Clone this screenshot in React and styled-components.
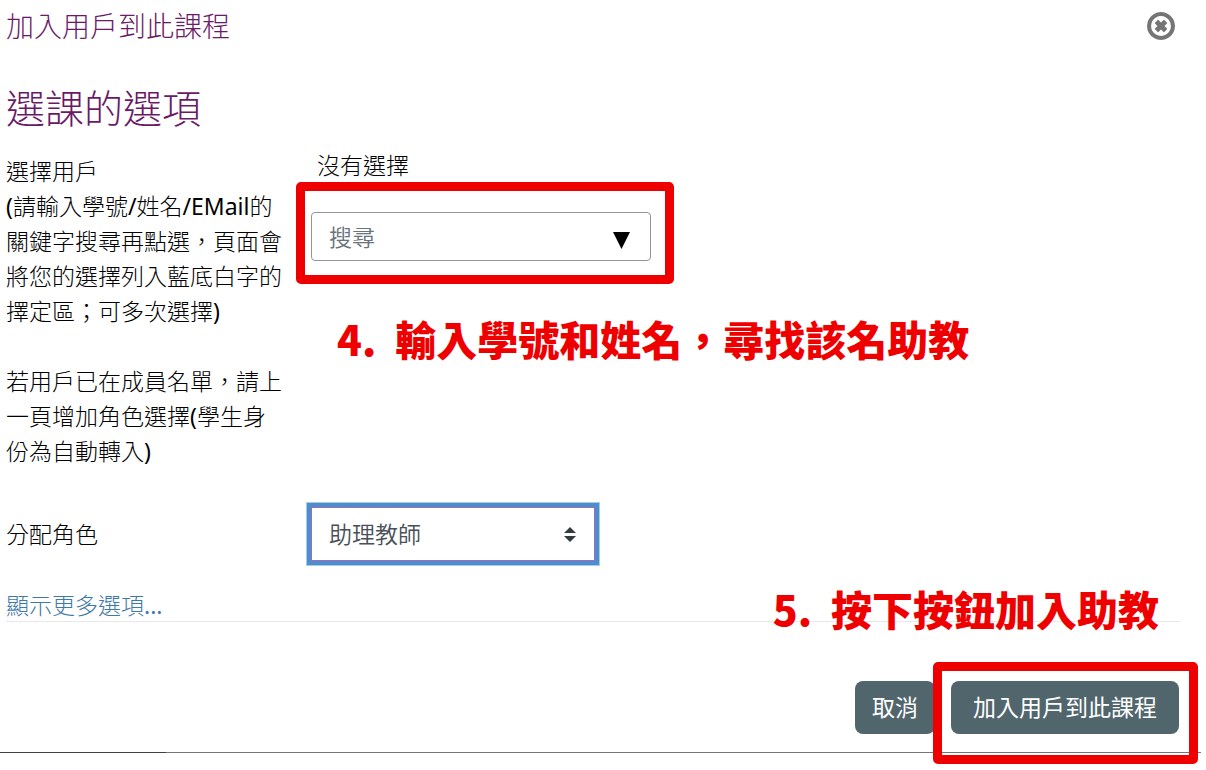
import React from "react";
import styled, { createGlobalStyle } from "styled-components";

const GlobalStyle = createGlobalStyle`
  *, *::before, *::after { box-sizing: border-box; }
  body {
    margin: 0;
    background: #fff;
    color: #1d2125;
    font-family: "Noto Sans", "Noto Sans CJK TC", sans-serif;
    font-size: 23px;
    line-height: 35px;
  }
  button, input, select { font: inherit; }
`;

const Dialog = styled.main`
  padding: 6px 26px 0 6px;
`;

const Header = styled.header`
  display: flex;
  justify-content: space-between;
  align-items: center;
  padding-right: 5px;
`;

const Title = styled.h1`
  margin: 0;
  color: #6a1a66;
  font-size: 28px;
  font-weight: 300;
  line-height: 40px;
`;

const CloseButton = styled.button`
  display: flex;
  padding: 0;
  border: 0;
  background: none;
  color: #757575;
  cursor: pointer;
`;

const SectionTitle = styled.h2`
  margin: 34px 0 18px;
  color: #6a1a66;
  font-size: 39px;
  font-weight: 300;
  line-height: 56px;
`;

const FieldRow = styled.div`
  display: grid;
  grid-template-columns: 305px minmax(0, 1fr);
  align-items: ${(p) => p.$align || "start"};
  margin-bottom: ${(p) => p.$gap || 0}px;
`;

const Label = styled.label`
  color: #000;
  font-weight: 300;
  white-space: nowrap;
`;

const Latin = styled.span`
  font-weight: 400;
`;

const SearchColumn = styled.div`
  position: relative;
  margin-top: -6px;
`;

const Status = styled.p`
  margin: 0 0 29px;
  padding-left: 6px;
  color: #000;
  font-weight: 300;
`;

const Combo = styled.div`
  position: relative;
  width: 340px;
`;

const SearchInput = styled.input`
  display: block;
  width: 100%;
  height: 49px;
  padding: 0 50px 0 17px;
  border: 1px solid #8f959e;
  border-radius: 4px;
  background: #fff;
  color: #495057;
  font-weight: 350;
  &::placeholder { color: #6a737b; opacity: 1; }
`;

const ComboArrow = styled.svg`
  position: absolute;
  top: 20px;
  right: 21px;
`;

const SelectBox = styled.div`
  position: relative;
  width: 284px;
`;

const Select = styled.select`
  display: block;
  width: 100%;
  height: 54px;
  padding: 0 48px 0 17px;
  appearance: none;
  border: 1px solid #a566c4;
  border-radius: 0;
  outline: 0;
  box-shadow: 0 0 0 4px #4a8fcc, 0 0 0 5px #a9cbe8;
  background: #fff;
  color: #495057;
  font-weight: 350;
`;

const SelectArrows = styled.svg`
  position: absolute;
  top: 20px;
  right: 19px;
  pointer-events: none;
`;

const MoreLink = styled.a`
  display: block;
  width: fit-content;
  color: #3f79a8;
  font-weight: 300;
  line-height: 32px;
  text-decoration: none;
`;

const Divider = styled.hr`
  margin: 0;
  border: 0;
  border-top: 1px solid #e9e9e9;
`;

const Footer = styled.footer`
  position: relative;
  display: flex;
  justify-content: flex-end;
  gap: 16px;
  padding: 59px 1px 18px 0;
`;

const ActionButton = styled.button`
  width: ${(p) => p.$width}px;
  height: 53px;
  padding: 0;
  border: 0;
  border-radius: 8px;
  background: #51666c;
  color: #fff;
  line-height: 53px;
  cursor: pointer;
`;

const BottomRule = styled.div`
  height: 1px;
  margin: 0 5px 16px 0;
  background: linear-gradient(to right, #404040 166px, #757575 166px);
`;

const Highlight = styled.div`
  position: absolute;
  top: ${(p) => p.$top}px;
  left: ${(p) => p.$left};
  right: ${(p) => p.$right};
  width: ${(p) => p.$width}px;
  height: 102px;
  border: 9px solid #ef0000;
  border-radius: 5px;
  pointer-events: none;
`;

const Note = styled.p`
  position: absolute;
  top: ${(p) => p.$top}px;
  left: ${(p) => p.$left};
  right: ${(p) => p.$right};
  margin: 0;
  color: #ef0000;
  font-family: "Noto Sans CJK TC", sans-serif;
  font-size: 41px;
  font-weight: 900;
  line-height: 60px;
  white-space: pre;
  pointer-events: none;
`;

export default function App() {
  return (
    <>
      <GlobalStyle />
      <Dialog>
        <Header>
          <Title>加入用戶到此課程</Title>
          <CloseButton type="button" aria-label="關閉">
            <svg width="28" height="28" viewBox="0 128 1536 1536" fill="currentColor" aria-hidden="true">
              <path d="M1097 1079l-146 146q-10 10-23 10t-23-10l-137-137-137 137q-10 10-23 10t-23-10l-146-146q-10-10-10-23t10-23l137-137-137-137q-10-10-10-23t10-23l146-146q10-10 23-10t23 10l137 137 137-137q10-10 23-10t23 10l146 146q10 10 10 23t-10 23l-137 137 137 137q10 10 10 23t-10 23zM1312 896q0-148-73-273t-198-198-273-73-273 73-198 198-73 273 73 273 198 198 273 73 273-73 198-198 73-273zM1536 896q0 209-103 385.5t-279.5 279.5-385.5 103-385.5-103-279.5-279.5-103-385.5 103-385.5 279.5-279.5 385.5-103 385.5 103 279.5 279.5 103 385.5z" />
            </svg>
          </CloseButton>
        </Header>

        <SectionTitle>選課的選項</SectionTitle>

        <FieldRow $gap={38}>
          <Label htmlFor="user-search">
            選擇用戶
            <br />
            <Latin>(</Latin>請輸入學號<Latin>/</Latin>姓名<Latin>/EMail</Latin>的
            <br />
            關鍵字搜尋再點選，頁面會
            <br />
            將您的選擇列入藍底白字的
            <br />
            擇定區；可多次選擇<Latin>)</Latin>
            <br />
            <br />
            若用戶已在成員名單，請上
            <br />
            一頁增加角色選擇<Latin>(</Latin>學生身
            <br />
            份為自動轉入<Latin>)</Latin>
          </Label>
          <SearchColumn>
            <Status>沒有選擇</Status>
            <Combo>
              <SearchInput id="user-search" type="text" placeholder="搜尋" />
              <ComboArrow width="17" height="17" viewBox="0 0 17 17" aria-hidden="true">
                <path d="M0 0H17L8.5 17Z" fill="#000" />
              </ComboArrow>
            </Combo>
            <Highlight $top={34} $left="-15px" $width={378} />
            <Note $top={160} $left="26px">4.  輸入學號和姓名，尋找該名助教</Note>
          </SearchColumn>
        </FieldRow>

        <FieldRow $align="center" $gap={28}>
          <Label htmlFor="role">分配角色</Label>
          <SelectBox>
            <Select id="role" defaultValue="assistant">
              <option value="assistant">助理教師</option>
            </Select>
            <SelectArrows width="12" height="15" viewBox="0 0 12 15" aria-hidden="true">
              <path d="M0 6L6 0L12 6ZM0 9H12L6 15Z" fill="#343a40" />
            </SelectArrows>
          </SelectBox>
        </FieldRow>

        <MoreLink href="#more">顯示更多選項<Latin>...</Latin></MoreLink>
        <Divider />

        <Footer>
          <ActionButton type="button" $width={80}>取消</ActionButton>
          <ActionButton type="submit" $width={228}>加入用戶到此課程</ActionButton>
          <Highlight $top={40} $right="-18px" $width={265} />
          <Note $top={-44} $right="21px">5.  按下按鈕加入助教</Note>
        </Footer>
      </Dialog>
      <BottomRule />
    </>
  );
}
